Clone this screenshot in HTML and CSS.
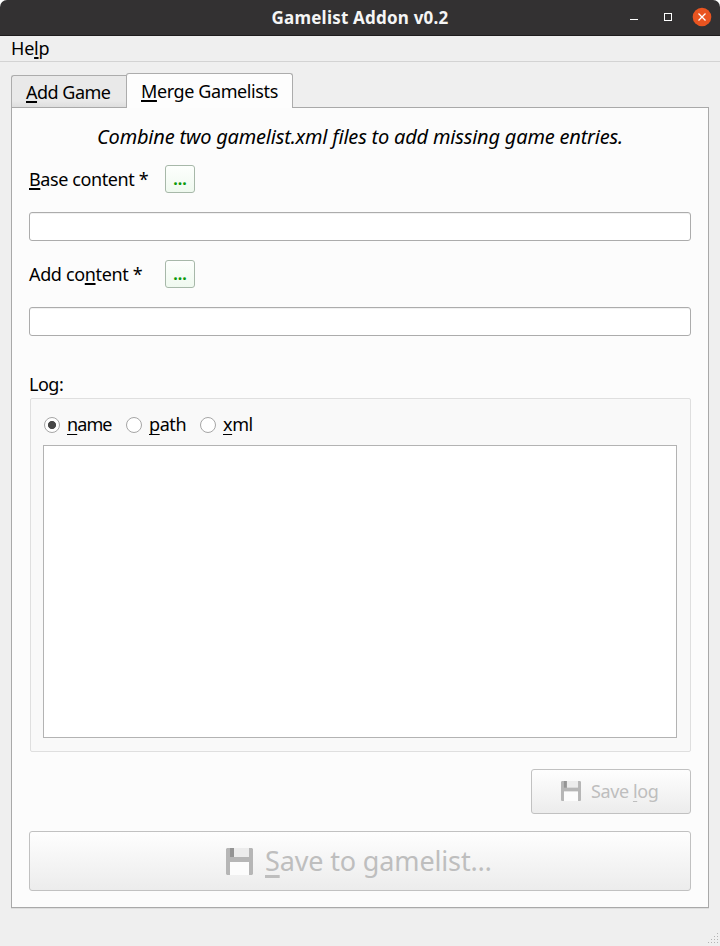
FILE: index.html
```html
<!DOCTYPE html>
<html lang="en">
<head>
<meta charset="utf-8">
<title>Gamelist Addon v0.2</title>
<link rel="stylesheet" href="styles.css">
</head>
<body>
<div class="window">
  <header class="titlebar">
    <span class="title">Gamelist Addon v0.2</span>
    <svg class="controls" width="90" height="36" viewBox="0 0 90 36">
      <path d="M0 19.5h8" stroke="#fff"/>
      <rect x="34.500" y="13.500" width="7" height="7" fill="none" stroke="#fff"/>
      <circle cx="72" cy="17" r="9.300" fill="#e95420"/>
      <path d="M68.500 13.500l7 7m0-7l-7 7" stroke="#fff" stroke-width="1.300"/>
    </svg>
  </header>
  <nav class="menubar"><span class="help">He<u>l</u>p</span></nav>
  <div class="tabs">
    <div class="tab tab-add"><span><u>A</u>dd Game</span></div>
    <div class="tab tab-merge"><span><u>M</u>erge Gamelists</span></div>
  </div>
  <main class="panel">
    <p class="intro">Combine two gamelist.xml files to add missing game entries.</p>
    <div class="field">
      <label class="base"><u>B</u>ase content *</label><button class="browse">...</button>
    </div>
    <input class="line" type="text">
    <div class="field">
      <label class="add">Add co<u>n</u>tent *</label><button class="browse">...</button>
    </div>
    <input class="line" type="text">
    <div class="log-label">Log:</div>
    <section class="group">
      <div class="radios">
        <i class="radio checked"></i><span class="opt name"><u>n</u>ame</span>
        <i class="radio"></i><span class="opt path"><u>p</u>ath</span>
        <i class="radio"></i><span class="opt xml"><u>x</u>ml</span>
      </div>
      <div class="log"></div>
    </section>
    <button class="save save-log" disabled>
      <svg width="20" height="20" viewBox="0 0 27 27">
        <path d="M1 0h25l1 1v25l-1 1H1l-1-1V1z" fill="#b6b6b6"/>
        <path d="M4 0h4v9H4z" fill="#949494"/>
        <path d="M8 0h15v9H8z" fill="#ececec"/>
        <path d="M4 14h19v13H4z" fill="#fcfcfc"/>
      </svg>
      <span>Save <u>l</u>og</span>
    </button>
    <button class="save save-main" disabled>
      <svg width="27" height="27" viewBox="0 0 27 27">
        <path d="M1 0h25l1 1v25l-1 1H1l-1-1V1z" fill="#b6b6b6"/>
        <path d="M4 0h4v9H4z" fill="#949494"/>
        <path d="M8 0h15v9H8z" fill="#ececec"/>
        <path d="M4 14h19v13H4z" fill="#fcfcfc"/>
      </svg>
      <span><u>S</u>ave to gamelist…</span>
    </button>
  </main>
  <footer class="status">
    <svg width="12" height="12" viewBox="0 0 12 12" fill="#b4b4b4">
      <path d="M9 0h1v1H9zM6 3h1v1H6zM9 3h1v1H9zM3 6h1v1H3zM6 6h1v1H6zM9 6h1v1H9zM0 9h1v1H0zM3 9h1v1H3zM6 9h1v1H6zM9 9h1v1H9z"/>
    </svg>
  </footer>
</div>
</body>
</html>
```
FILE: styles.css
```css
* { box-sizing: border-box; }
body {
  margin: 0;
  background: #fff;
  color: #000;
  font: 18px/24px "Noto Sans", "Open Sans", sans-serif;
}
button, input { font: inherit; margin: 0; padding: 0; }
span, label { white-space: nowrap; }
u {
  text-decoration: underline 2px;
  text-decoration-skip-ink: none;
  text-underline-offset: 2px;
}
.window {
  width: 720px;
  height: 946px;
  display: flex;
  flex-direction: column;
  background: #efefef;
  border-radius: 7px 7px 0 0;
  overflow: hidden;
}
.titlebar {
  height: 36px;
  display: grid;
  grid-template-columns: 90px 1fr 90px;
  background: #333132;
  border-bottom: 1px solid #1e1c1d;
}
.title {
  grid-column: 2;
  text-align: center;
  color: #f5f5f5;
  font-size: 17px;
  font-weight: 700;
  line-height: 35px;
  letter-spacing: 0.2px;
}
.controls { display: block; }
.menubar {
  height: 26px;
  padding-left: 11px;
  border-bottom: 1px solid #d3d3d3;
}
.help { letter-spacing: -0.2px; }
.tabs {
  display: flex;
  align-items: flex-end;
  height: 46px;
  margin-left: 11px;
}
.tab { border: 1px solid #acacac; border-radius: 3px 3px 0 0; }
.tab-add {
  width: 115px;
  height: 33px;
  padding: 4px 0 0 14px;
  border-right: 0;
  border-top-right-radius: 0;
  background: linear-gradient(#e9e9e9 80%, #dedede);
  letter-spacing: -0.5px;
}
.tab-merge {
  width: 167px;
  height: 35px;
  padding: 5px 0 0 14px;
  border-bottom: 0;
  background: #fdfdfd;
  z-index: 1;
  letter-spacing: -0.4px;
}
.panel {
  display: flex;
  flex-direction: column;
  width: 698px;
  height: 801px;
  margin: -1px 0 0 11px;
  padding: 16px 17px;
  border: 1px solid #a9a9a9;
  background: #fcfcfc;
  box-shadow: 0 1px #dedede;
}
.intro {
  height: 26px;
  margin: 0 0 15px;
  text-align: center;
  white-space: nowrap;
  font-size: 20px;
  font-style: italic;
  line-height: 26px;
  letter-spacing: -0.2px;
}
.field { display: flex; height: 28px; line-height: 29px; }
.field label { width: 136px; letter-spacing: -0.4px; }
.field .add { letter-spacing: -0.35px; }
.browse {
  width: 30px;
  height: 28px;
  border: 1px solid #a7b8a9;
  border-radius: 3px;
  background: linear-gradient(#fdfffd, #eff9ef);
  color: #0a990a;
  font-size: 16px;
  font-weight: 700;
  line-height: 26px;
}
.line {
  width: 662px;
  height: 29px;
  margin: 19px 0;
  border: 1px solid #acacac;
  border-radius: 3px;
  background: #fff;
  box-shadow: inset 0 1px #f1f1f1;
}
.log-label { height: 26px; margin-top: 17px; letter-spacing: -0.5px; }
.group {
  width: 661px;
  height: 354px;
  margin-left: 1px;
  padding: 13px 12px;
  border: 1px solid #dfdfdf;
  border-radius: 2px;
  background: #f9f9f9;
}
.radios { display: flex; align-items: center; height: 25px; }
.radio {
  width: 16px;
  height: 16px;
  margin-left: 1px;
  border: 1px solid #a6a6a6;
  border-radius: 50%;
  background: #fff;
}
.checked { background: radial-gradient(circle, #474747 3.7px, #fff 4.4px); }
.opt { margin-left: 7px; padding-bottom: 2px; letter-spacing: -0.4px; }
.opt u { text-decoration-thickness: 1px; text-underline-offset: 3px; }
.name { width: 58px; letter-spacing: -0.9px; }
.path { width: 50px; }
.log {
  width: 634px;
  height: 293px;
  margin-top: 8px;
  border: 1px solid #b3b3b3;
  background: #fff;
}
.save {
  display: flex;
  align-items: center;
  border: 1px solid #c1c1c1;
  border-radius: 3px;
  background: linear-gradient(#fefefe, #ececec);
  color: #bebebe;
}
.save-log {
  align-self: flex-end;
  width: 160px;
  height: 45px;
  margin-top: 17px;
  padding: 0 0 2px 29px;
  gap: 10px;
  letter-spacing: -0.4px;
}
.save-log u { text-decoration-thickness: 1px; text-underline-offset: 3px; }
.save-main {
  width: 662px;
  height: 60px;
  margin-top: 17px;
  padding-left: 196px;
  gap: 12px;
  font-size: 27px;
  letter-spacing: -0.15px;
}
.save-main u { text-decoration-thickness: 3px; text-underline-offset: 4px; }
.status {
  flex: 1;
  display: flex;
  justify-content: flex-end;
  align-items: flex-end;
  padding-bottom: 1px;
}
```
